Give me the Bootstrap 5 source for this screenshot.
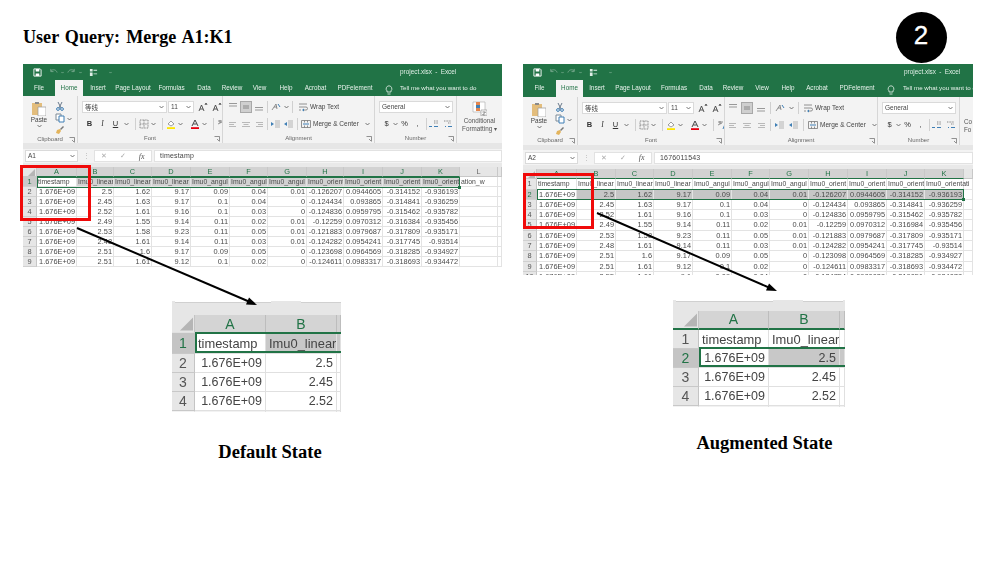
<!DOCTYPE html>
<html lang="en">
<head>
<meta charset="utf-8">
<title>User Query: Merge A1:K1</title>
<link href="https://cdn.jsdelivr.net/npm/bootstrap@5.3.0/dist/css/bootstrap.min.css" rel="stylesheet">
<style>
html,body{margin:0;background:#fff}
.stage{position:relative;width:996px;height:561px;overflow:hidden;background:#fff;font-family:"Liberation Serif",serif;color:#000}
.fig-head{height:64px;padding-left:23px}
.fig-title{font-weight:700;font-size:18.1px;line-height:20px;margin-top:27px;word-spacing:1.5px}
.step-dot{width:51px;height:51px;border-radius:50%;background:#000;color:#fff;font:26px/46px "Liberation Sans",sans-serif;-webkit-text-stroke:.3px #fff;text-align:center;margin:11.5px 49.5px 0 0}
.panel-a{position:relative;width:480px;margin-left:23px}
.panel-b{position:relative;width:450px;margin-left:20px}
.cap{width:200px;text-align:center;font-weight:700;font-size:18.5px;line-height:20px}
.panel-a .cap{margin-left:147px;margin-top:30px}
.panel-b .cap{margin-left:141.5px;margin-top:26px}
.red-box{position:absolute;border:3px solid #f00a0a;width:71px;height:56px}
.panel-a .red-box{left:-3px;top:101px}
.panel-b .red-box{left:0;top:109px}
.arrows{position:absolute;left:0;top:0;pointer-events:none}

/* excel window */
.xl-win{overflow:hidden;background:#fff;font:6.5px/10px "Liberation Sans",sans-serif;color:#444;filter:blur(.35px)}
.panel-a .xl-win{width:479px;height:207px}
.panel-b .xl-win{width:450px;height:211px}
.xl-title{height:16px;background:#217346;color:#dfeee6;padding-left:10px;align-items:center;gap:3px}
.xl-title svg{width:9px;height:9px;display:block}
.xl-title svg.tcar{width:3px;height:3px}
.xl-name{position:absolute;top:3px;font-size:6.4px;color:#dfeee6;word-spacing:1.5px}
.panel-a .xl-name{left:377px}
.panel-b .xl-name{left:381px}
.xl-title-row{position:relative}
.xl-tabs{display:grid;height:16px;background:#217346;color:#e8f2ec;text-align:center;font-size:6.3px;line-height:16px;white-space:nowrap}
.panel-a .xl-tabs{grid-template-columns:32px 28px 30px 40px 37px 28px 28px 27px 26px 33px 46px 22px 1fr}
.panel-b .xl-tabs{height:17px;grid-template-columns:33px 27px 28px 44px 38px 26px 28px 30px 22px 36px 44px 24px 1fr}
.xl-tab-on{background:#f3f3f3;color:#217346;margin-top:-1px;line-height:17px}
.xl-tell{text-align:left;overflow:hidden;font-size:6.2px}
.xl-tabs svg{width:8px;height:10px;margin-top:3px}
.xl-ribbon{display:grid;height:47px;background:#f3f3f3}
.panel-a .xl-ribbon{grid-template-columns:55px 145px 152px 82px 1fr}
.panel-b .xl-ribbon{height:48px;grid-template-columns:55px 147px 153px 82px 1fr}
.xl-grp{display:flex;flex-direction:column;border-right:1px solid #d6d6d6;min-width:0;overflow:hidden;padding-top:5px}
.xl-grp:last-child{border-right:0}
.xl-lbl{margin-top:auto;display:grid;grid-template-columns:1fr auto 1fr;height:9px;line-height:9px;margin-bottom:0;padding-top:0;font-size:6px;color:#666;text-align:center}
.xl-lbl svg{width:6px;height:6px;justify-self:end;margin:2px 2px 0 0}
.xl-row{display:flex;align-items:center;height:12px}
.xl-row+.xl-row{margin-top:5px}
.ic{width:10px;height:10px;flex:none;display:block}
.ic-car{width:5px;height:4px;flex:none;margin:0 3px 0 2px;display:block}
.xl-box{background:#fff;border:1px solid #dadada;height:12px;line-height:10px;padding-left:2px;font-size:6.5px;display:flex;justify-content:space-between;align-items:center;flex:none;white-space:nowrap;overflow:hidden}
.xl-box svg{width:5px;height:4px;margin-right:2px}
.bx-font{width:85px;margin-left:4px;font-family:"Noto Sans CJK SC","Liberation Sans",sans-serif}
.bx-size{width:26px;margin-left:1px}
.bx-num{width:74px;margin-left:4px}
.pad-b{margin-left:5px}
.tg{width:13px;text-align:center;flex:none;font-size:7.5px;color:#333}
.tg-b{font-weight:700}
.tg-i{font-style:italic;font-family:"Liberation Serif",serif}
.tg-u{text-decoration:underline}
.al-on{background:#cfcfcf;outline:1px solid #a8a8a8}
.xl-sep{width:1px;height:12px;background:#d0d0d0;margin:0 3px;flex:none}
.xl-al{margin-left:5px;gap:3px}
.panel-b .xl-al{margin-left:3px;gap:4px}
.xl-al .xl-sep{margin:0}
.xl-al .ic-car{margin:0}
.al-right{margin-left:auto;display:flex;align-items:center;gap:2px;width:76px;flex:none}
.xl-word{white-space:nowrap;font-size:6.5px}
.xl-num-row .ic-car{margin:0}
.xl-num-row .xl-sep{margin:0 2px}
.clip-wrap{display:flex;padding-left:9px}
.clip-main{display:flex;flex-direction:column;align-items:center;width:14px;font-size:6.4px;line-height:7px}
.clip-main .paste-ic{width:14px;height:15px;display:block}
.clip-main .ic-car{margin:1px 0 0}
.clip-tools{display:flex;flex-direction:column;gap:2px;margin-left:9px}
.clip-tools svg{width:10px;height:10px;display:block}
.cf-wrap{display:flex;flex-direction:column;align-items:center;line-height:8px;font-size:6.3px;white-space:nowrap;color:#555}
.cf-wrap svg{width:15px;height:15px;display:block;margin-bottom:1px}
.xl-band{height:6px;background:#e6e6e6}
.panel-b .xl-band{height:5px}
.xl-fbar{height:14px;background:#f3f3f3;align-items:center;padding-left:2px}
.panel-b .xl-fbar{height:15px}
.fb-name{width:53px}
.fb-dots{width:16px;text-align:center;color:#bbb;flex:none}
.fb-tools{width:58px;height:12px;flex:none;background:#fff;border:1px solid #e2e2e2;display:flex;align-items:center;justify-content:space-around;color:#aaa;margin-right:2px}
.fb-tools i{font:italic 8px "Liberation Serif",serif;color:#555}
.fb-val{flex:1;height:12px;background:#fff;border:1px solid #e2e2e2;padding-left:5px;line-height:10px;font-size:7px;letter-spacing:.2px}
.xl-band2{height:4px;background:#e9e9e9}
.xl-sheet{position:relative}
.sh{table-layout:fixed;border-collapse:separate;border-spacing:0;width:100%}
.sh td,.sh th{padding:0 1px;border-right:1px solid #e3e3e3;border-bottom:1px solid #e3e3e3;white-space:nowrap;overflow:hidden;font-weight:400;color:#4a4a4a;text-align:right;font-size:7.4px;line-height:9px;height:10px}
.sh th.ch{background:#e6e6e6;text-align:center;color:#666;border-right-color:#c8c8c8;border-bottom-color:#c8c8c8}
.sh th.ch.on{background:#d2d2d2;color:#217346;border-bottom:1px solid #217346}
.sh th.rh{background:#e6e6e6;text-align:center;color:#555;border-right-color:#c6c6c6;border-bottom-color:#d0d0d0;padding:0}
.sh th.rh.on{background:#c9c9c9;color:#217346}
.sh th.corner{background:#e6e6e6;padding:0;border-right-color:#c8c8c8;border-bottom-color:#c8c8c8}
.sh th.corner svg{display:block;margin:2px 1px 0 auto;width:7px;height:7px}
.sh td.tx{text-align:left;font-size:6.85px;padding:0 0 0 1px}
.sh .sel{background:#d2d2d2}
.sh .sel-d{background:#c6c6c6}
.sh .cur{background:#fff}
.sh td.ovf{overflow:visible}
.sh-b td,.sh-b th{height:10.3px;line-height:9.3px}
.sel-frame{position:absolute;border:1px solid #217346;pointer-events:none}
.fill-dot{position:absolute;right:-2px;bottom:-2px;width:3px;height:3px;background:#217346;border:0}
.panel-a .sel-frame{left:14px;top:10px;width:423px;height:11px}
.panel-b .sel-frame{left:14px;top:20px;width:427px;height:11px}

/* enlarged crops */
.zoomed{overflow:hidden;filter:blur(.3px);font:12.5px/17px "Liberation Sans",sans-serif;color:#444;background:#fff}
.panel-a .zoomed{margin:30px 0 0 149px;width:169px;height:111px}
.panel-b .zoomed{margin:25px 0 0 150px;width:172px;height:107px}
.z-top{background:#e6e6e6;padding-left:3px;gap:30px}
.panel-a .z-top{height:14px}
.panel-b .z-top{height:11px}
.z-top div{height:2px;background:#fff;border-bottom:1px solid #d0d0d0}
.z-tab-1{width:97px}
.z-tab-2{width:40px}
.zt-wrap{position:relative}
.zt{table-layout:fixed;border-collapse:separate;border-spacing:0;width:100%}
.zt th,.zt td{padding:0 3px 0 0;font-weight:400;text-align:right;color:#444;white-space:nowrap;overflow:hidden;border-right:1px solid #e0e0e0;border-bottom:1px solid #e0e0e0}
.zt .zc{background:#d4d4d4;text-align:center;color:#217346;font-size:14px;border-right-color:#bdbdbd;height:17px;padding:0}
.panel-a .zt .zc{padding-top:2px;line-height:15px}
.zt th.zc0,.panel-a .zt th.zc0{background:#e6e6e6;padding:0;border-right-color:#c4c4c4}
.zt .zc0 svg{display:block;margin:1px 1px 0 auto;width:13px;height:14px}
.zt .zr{background:#e6e6e6;text-align:center;color:#555;font-size:14px;padding:0;border-right-color:#c4c4c4;border-bottom-color:#c8c8c8}
.zt .zr.on{background:#c4c4c4;color:#217346}
.zt td.zl{text-align:left;padding:0 0 0 3px;font-size:12.9px}
.zt .sel{background:#c8c8c8}
.zt .stub{height:5px;font-size:0;line-height:0;background:#f2f2f2}
.zt .rw td,.zt .rw th{height:19px}
.zt .rw-tall td,.zt .rw-tall th{height:21px}
.z-frame{position:absolute;border:2px solid #217346;pointer-events:none}
.panel-a .z-frame{left:23px;top:17px;width:150px;height:21px}
.panel-b .z-frame{left:26px;top:36px;width:150px;height:20px}
.panel-b .zt .zc{border-bottom:2px solid #217346}
</style>
</head>
<body>
<svg class="d-none" xmlns="http://www.w3.org/2000/svg">
<symbol id="i-save" viewBox="0 0 10 10"><path d="M1 1h7l1 1v7H1z" fill="none" stroke="#fff" stroke-width="1"/><path d="M3 1h4v3H3zM3 6h4v3H3z" fill="#fff"/></symbol>
<symbol id="i-undo" viewBox="0 0 10 10"><path d="M2 3c3-2 6-1 7 2M2 1v3h3" fill="none" stroke="#79a98f" stroke-width="1"/></symbol>
<symbol id="i-redo" viewBox="0 0 10 10"><path d="M8 3C5 1 2 2 1 5M8 1v3H5" fill="none" stroke="#79a98f" stroke-width="1"/></symbol>
<symbol id="i-touch" viewBox="0 0 10 10"><path d="M1 1h3v3H1zM5 2h4v1H5zM1 5h3v4H1zM5 6h4v1H5z" fill="#dfeee6"/></symbol>
<symbol id="i-car" viewBox="0 0 5 4"><path d="M.5 1l2 2 2-2" fill="none" stroke="#555" stroke-width=".8"/></symbol>
<symbol id="i-carw" viewBox="0 0 5 4"><path d="M.5 1l2 2 2-2" fill="none" stroke="#9cc2ad" stroke-width="1"/></symbol>
<symbol id="i-paste" viewBox="0 0 14 15"><path d="M0 2h10v12H0z" fill="#e3bd7c"/><path d="M3 1h4v2H3z" fill="#8a8a8a"/><path d="M6 6h8v9H6z" fill="#fff" stroke="#999" stroke-width=".7"/></symbol>
<symbol id="i-cut" viewBox="0 0 10 10"><path d="M3 1l3 6M7 1L4 7" stroke="#6a7a8c" fill="none"/><circle cx="3" cy="8" r="1.4" fill="none" stroke="#3f7fb5"/><circle cx="7" cy="8" r="1.4" fill="none" stroke="#3f7fb5"/></symbol>
<symbol id="i-copy" viewBox="0 0 10 10"><path d="M1 1h5v6H1z" fill="#fff" stroke="#7d8a96"/><path d="M4 3h5v6H4z" fill="#fff" stroke="#3f7fb5"/></symbol>
<symbol id="i-brush" viewBox="0 0 10 10"><path d="M5 4l3-3 1 1-3 3z" fill="#777"/><path d="M2 5l3-1 1 2-2 3-3-1z" fill="#e3b45c"/></symbol>
<symbol id="i-grow" viewBox="0 0 10 10"><path d="M1 9l2.500-6L6 9M2 7h3M7 3l1-2 1 2" fill="none" stroke="#444" stroke-width=".9"/></symbol>
<symbol id="i-border" viewBox="0 0 10 10"><path d="M1 1h8v8H1zM5 1v8M1 5h8" fill="none" stroke="#888" stroke-dasharray="1 .6"/></symbol>
<symbol id="i-fill" viewBox="0 0 10 10"><path d="M2 5l3-3 3 3-3 2z" fill="#fff" stroke="#777" stroke-width=".7"/><path d="M1 8.200h8V10H1z" fill="#ffe600"/></symbol>
<symbol id="i-color" viewBox="0 0 10 10"><path d="M2 7l3-6 3 6M3.300 5h3.400" fill="none" stroke="#333" stroke-width=".9"/><path d="M1 8.200h8V10H1z" fill="#e8000f"/></symbol>
<symbol id="i-phon" viewBox="0 0 10 10"><path d="M1 2h5M3 1v3M1 5l4-2" stroke="#666" stroke-width=".7" fill="none"/><path d="M6 9l2-5 1 5" fill="none" stroke="#3f7fb5"/></symbol>
<symbol id="i-at" viewBox="0 0 10 10"><path d="M1 1.500h8M1 4h8" stroke="#999"/></symbol>
<symbol id="i-am" viewBox="0 0 10 10"><path d="M2 4h6M2 6h6" stroke="#888"/></symbol>
<symbol id="i-ab" viewBox="0 0 10 10"><path d="M1 5.500h8M1 8h8" stroke="#999"/></symbol>
<symbol id="i-orient" viewBox="0 0 10 10"><path d="M1 8l4-6 1 5M3 5h3" fill="none" stroke="#777" stroke-width=".8"/><path d="M7 2l2 3" stroke="#3f7fb5"/></symbol>
<symbol id="i-l" viewBox="0 0 10 10"><path d="M1 3.500h7M1 5.500h5M1 7.500h7" stroke="#aaa" stroke-width=".8"/></symbol>
<symbol id="i-c" viewBox="0 0 10 10"><path d="M1 3.500h8M2.500 5.500h5M1 7.500h8" stroke="#aaa" stroke-width=".8"/></symbol>
<symbol id="i-r" viewBox="0 0 10 10"><path d="M2 3.500h7M4 5.500h5M2 7.500h7" stroke="#aaa" stroke-width=".8"/></symbol>
<symbol id="i-ind" viewBox="0 0 10 10"><path d="M4 2h5M4 4h5M4 6h5M4 8h5" stroke="#999" stroke-width=".7"/><path d="M0 5l3-2v4z" fill="#3f7fb5"/></symbol>
<symbol id="i-out" viewBox="0 0 10 10"><path d="M4 2h5M4 4h5M4 6h5M4 8h5" stroke="#999" stroke-width=".7"/><path d="M3 5L0 3v4z" fill="#3f7fb5"/></symbol>
<symbol id="i-wrap" viewBox="0 0 10 10"><path d="M1 2h8M1 5h7a1.500 1.500 0 010 3H5M1 8h2" fill="none" stroke="#777" stroke-width=".8"/><path d="M6 6.500L4 8l2 1.500z" fill="#3f7fb5"/></symbol>
<symbol id="i-merge" viewBox="0 0 10 10"><path d="M.5 1.500h9v7h-9zM3.500 1.500v2M6.500 1.500v2M3.500 6.500v2M6.500 6.500v2" fill="none" stroke="#777" stroke-width=".8"/><path d="M2 5h6" stroke="#3f7fb5" stroke-width="1"/></symbol>
<symbol id="i-inc" viewBox="0 0 10 10"><path d="M5 2h4M5 4h4" stroke="#888" stroke-dasharray="1 .6"/><path d="M5 7.500h4M0 7.500h3" stroke="#3f7fb5"/></symbol>
<symbol id="i-dec" viewBox="0 0 10 10"><path d="M1 2h7M5 4h3" stroke="#888" stroke-dasharray="1 .6"/><path d="M9 7.500H5M2 7.500h1" stroke="#3f7fb5"/></symbol>
<symbol id="i-cf" viewBox="0 0 15 15"><path d="M1 1h12v10H1z" fill="#fff" stroke="#aaa" stroke-width=".6"/><path d="M4 1h4v3H4z" fill="#e3854c"/><path d="M4 4h4v3H4z" fill="#3f7fb5"/><path d="M4 7h4v3H4z" fill="#e3854c"/><path d="M9 9h6v6H9z" fill="#fff" stroke="#888" stroke-width=".6"/><path d="M10.500 11h3l-3 3h3" fill="none" stroke="#555" stroke-width=".7"/></symbol>
<symbol id="i-launch" viewBox="0 0 6 6"><path d="M.5.500h5v5M3 3l2 2" fill="none" stroke="#666" stroke-width=".7"/></symbol>
<symbol id="i-bulb" viewBox="0 0 8 10"><path d="M4 .8a3 3 0 012 5.100V7H2V5.900A3 3 0 014 .8zM2.500 9h3" fill="none" stroke="#e8f2ec" stroke-width=".8"/></symbol>
<symbol id="i-tri" viewBox="0 0 7 7"><path d="M7 0v7H0z" fill="#b5b5b5"/></symbol>
</svg>

<div class="stage">
  <div class="fig-head d-flex justify-content-between align-items-start">
    <div class="fig-title">User Query: Merge A1:K1</div>
    <div class="step-dot">2</div>
  </div>

  <div class="d-flex">
    <!-- Default state -->
    <section class="panel-a">
      <div class="xl-win">
        <div class="xl-title-row">
          <div class="xl-title d-flex">
            <svg class="me-1"><use href="#i-save"/></svg><svg><use href="#i-undo"/></svg><svg class="tcar"><use href="#i-carw"/></svg><svg><use href="#i-redo"/></svg><svg class="tcar"><use href="#i-carw"/></svg><svg class="ms-1"><use href="#i-touch"/></svg><svg class="tcar ms-2"><use href="#i-carw"/></svg>
          </div>
          <div class="xl-name">project.xlsx - Excel</div>
        </div>
        <div class="xl-tabs">
          <div>File</div><div class="xl-tab-on">Home</div><div>Insert</div><div>Page Layout</div><div>Formulas</div><div>Data</div><div>Review</div><div>View</div><div>Help</div><div>Acrobat</div><div>PDFelement</div><div><svg><use href="#i-bulb"/></svg></div><div class="xl-tell">Tell me what you want to do</div>
        </div>
        <div class="xl-ribbon">
          <div class="xl-grp">
            <div class="clip-wrap">
              <div class="clip-main"><svg class="paste-ic"><use href="#i-paste"/></svg><span>Paste</span><svg class="ic-car"><use href="#i-car"/></svg></div>
              <div class="clip-tools"><svg><use href="#i-cut"/></svg><svg><use href="#i-copy"/></svg><svg><use href="#i-brush"/></svg></div>
              <svg class="ic-car mt-3"><use href="#i-car"/></svg>
            </div>
            <div class="xl-lbl"><span></span><span>Clipboard</span><svg><use href="#i-launch"/></svg></div>
          </div>
          <div class="xl-grp">
            <div class="xl-row"><div class="xl-box bx-font"><span>等线</span><svg><use href="#i-car"/></svg></div><div class="xl-box bx-size"><span>11</span><svg><use href="#i-car"/></svg></div><svg class="ic ms-1"><use href="#i-grow"/></svg><svg class="ic ms-1"><use href="#i-grow"/></svg></div>
            <div class="xl-row pad-b"><span class="tg tg-b">B</span><span class="tg tg-i">I</span><span class="tg tg-u">U</span><svg class="ic-car"><use href="#i-car"/></svg><span class="xl-sep"></span><svg class="ic"><use href="#i-border"/></svg><svg class="ic-car"><use href="#i-car"/></svg><span class="xl-sep"></span><svg class="ic"><use href="#i-fill"/></svg><svg class="ic-car"><use href="#i-car"/></svg><svg class="ic ms-1"><use href="#i-color"/></svg><svg class="ic-car"><use href="#i-car"/></svg><span class="xl-sep"></span><svg class="ic"><use href="#i-phon"/></svg><svg class="ic-car"><use href="#i-car"/></svg></div>
            <div class="xl-lbl"><span></span><span>Font</span><svg><use href="#i-launch"/></svg></div>
          </div>
          <div class="xl-grp">
            <div class="xl-row xl-al"><svg class="ic"><use href="#i-at"/></svg><svg class="ic al-on"><use href="#i-am"/></svg><svg class="ic"><use href="#i-ab"/></svg><span class="xl-sep"></span><svg class="ic"><use href="#i-orient"/></svg><svg class="ic-car"><use href="#i-car"/></svg><span class="xl-sep"></span><div class="al-right"><svg class="ic"><use href="#i-wrap"/></svg><span class="xl-word">Wrap Text</span></div></div>
            <div class="xl-row xl-al"><svg class="ic"><use href="#i-l"/></svg><svg class="ic"><use href="#i-c"/></svg><svg class="ic"><use href="#i-r"/></svg><span class="xl-sep"></span><svg class="ic"><use href="#i-out"/></svg><svg class="ic"><use href="#i-ind"/></svg><span class="xl-sep"></span><div class="al-right"><svg class="ic"><use href="#i-merge"/></svg><span class="xl-word">Merge &amp; Center</span><svg class="ic-car ms-1"><use href="#i-car"/></svg></div></div>
            <div class="xl-lbl"><span></span><span>Alignment</span><svg><use href="#i-launch"/></svg></div>
          </div>
          <div class="xl-grp">
            <div class="xl-row"><div class="xl-box bx-num"><span>General</span><svg><use href="#i-car"/></svg></div></div>
            <div class="xl-row pad-b xl-num-row"><span class="tg">$</span><svg class="ic-car"><use href="#i-car"/></svg><span class="tg">%</span><span class="tg">,</span><span class="xl-sep"></span><svg class="ic"><use href="#i-inc"/></svg><svg class="ic ms-1"><use href="#i-dec"/></svg></div>
            <div class="xl-lbl"><span></span><span>Number</span><svg><use href="#i-launch"/></svg></div>
          </div>
          <div class="xl-grp">
            <div class="cf-wrap"><svg><use href="#i-cf"/></svg><span>Conditional</span><span>Formatting ▾</span></div>
          </div>
        </div>
        <div class="xl-band"></div>
        <div class="xl-fbar d-flex">
          <div class="xl-box fb-name"><span>A1</span><svg><use href="#i-car"/></svg></div>
          <div class="fb-dots">⋮</div>
          <div class="fb-tools"><span>✕</span><span>✓</span><i>fx</i></div>
          <div class="fb-val">timestamp</div>
        </div>
        <div class="xl-band2"></div>
        <div class="xl-sheet">
          <table class="sh">
            <colgroup><col style="width:14px"><col style="width:40px"><col style="width:37px"><col style="width:38px"><col style="width:39px"><col style="width:39px"><col style="width:38px"><col style="width:39px"><col style="width:37px"><col style="width:39px"><col style="width:39px"><col style="width:38px"><col style="width:38px"><col></colgroup>
            <tr><th class="corner"><svg><use href="#i-tri"/></svg></th><th class="ch on">A</th><th class="ch on">B</th><th class="ch on">C</th><th class="ch on">D</th><th class="ch on">E</th><th class="ch on">F</th><th class="ch on">G</th><th class="ch on">H</th><th class="ch on">I</th><th class="ch on">J</th><th class="ch on">K</th><th class="ch">L</th><th class="ch"></th></tr>
            <tr><th class="rh on">1</th><td class="tx cur">timestamp</td><td class="tx sel">Imu0_linear</td><td class="tx sel">Imu0_linear</td><td class="tx sel">Imu0_linear</td><td class="tx sel">Imu0_angul</td><td class="tx sel">Imu0_angul</td><td class="tx sel">Imu0_angul</td><td class="tx sel">Imu0_orient</td><td class="tx sel">Imu0_orient</td><td class="tx sel">Imu0_orient</td><td class="tx sel">Imu0_orient</td><td class="tx">ation_w</td><td></td></tr>
            <tr><th class="rh">2</th><td>1.676E+09</td><td>2.5</td><td>1.62</td><td>9.17</td><td>0.09</td><td>0.04</td><td>0.01</td><td>-0.126207</td><td>0.0944605</td><td>-0.314152</td><td>-0.936193</td><td></td><td></td></tr>
            <tr><th class="rh">3</th><td>1.676E+09</td><td>2.45</td><td>1.63</td><td>9.17</td><td>0.1</td><td>0.04</td><td>0</td><td>-0.124434</td><td>0.093865</td><td>-0.314841</td><td>-0.936259</td><td></td><td></td></tr>
            <tr><th class="rh">4</th><td>1.676E+09</td><td>2.52</td><td>1.61</td><td>9.16</td><td>0.1</td><td>0.03</td><td>0</td><td>-0.124836</td><td>0.0959795</td><td>-0.315462</td><td>-0.935782</td><td></td><td></td></tr>
            <tr><th class="rh">5</th><td>1.676E+09</td><td>2.49</td><td>1.55</td><td>9.14</td><td>0.11</td><td>0.02</td><td>0.01</td><td>-0.12259</td><td>0.0970312</td><td>-0.316384</td><td>-0.935456</td><td></td><td></td></tr>
            <tr><th class="rh">6</th><td>1.676E+09</td><td>2.53</td><td>1.58</td><td>9.23</td><td>0.11</td><td>0.05</td><td>0.01</td><td>-0.121883</td><td>0.0979687</td><td>-0.317809</td><td>-0.935171</td><td></td><td></td></tr>
            <tr><th class="rh">7</th><td>1.676E+09</td><td>2.48</td><td>1.61</td><td>9.14</td><td>0.11</td><td>0.03</td><td>0.01</td><td>-0.124282</td><td>0.0954241</td><td>-0.317745</td><td>-0.93514</td><td></td><td></td></tr>
            <tr><th class="rh">8</th><td>1.676E+09</td><td>2.51</td><td>1.6</td><td>9.17</td><td>0.09</td><td>0.05</td><td>0</td><td>-0.123698</td><td>0.0964569</td><td>-0.318285</td><td>-0.934927</td><td></td><td></td></tr>
            <tr><th class="rh">9</th><td>1.676E+09</td><td>2.51</td><td>1.61</td><td>9.12</td><td>0.1</td><td>0.02</td><td>0</td><td>-0.124611</td><td>0.0983317</td><td>-0.318693</td><td>-0.934472</td><td></td><td></td></tr>
          </table>
          <div class="sel-frame"><div class="fill-dot"></div></div>
        </div>
      </div>
      <div class="red-box"></div>

      <div class="zoomed">
        <div class="z-top d-flex"><div class="z-tab-1"></div><div class="z-tab-2"></div></div>
        <div class="zt-wrap">
          <table class="zt">
            <colgroup><col style="width:23px"><col style="width:71px"><col style="width:71px"><col></colgroup>
            <tr><th class="zc zc0"><svg><use href="#i-tri"/></svg></th><th class="zc">A</th><th class="zc">B</th><th class="zc"></th></tr>
            <tr class="rw-tall"><th class="zr on">1</th><td class="zl">timestamp</td><td class="zl sel">Imu0_linear</td><td class="sel"></td></tr>
            <tr class="rw"><th class="zr">2</th><td>1.676E+09</td><td>2.5</td><td></td></tr>
            <tr class="rw"><th class="zr">3</th><td>1.676E+09</td><td>2.45</td><td></td></tr>
            <tr class="rw"><th class="zr">4</th><td>1.676E+09</td><td>2.52</td><td></td></tr>
            <tr><th class="stub"></th><td class="stub"></td><td class="stub"></td><td class="stub"></td></tr>
          </table>
          <div class="z-frame"></div>
        </div>
      </div>
      <div class="cap">Default State</div>
    </section>

    <!-- Augmented state -->
    <section class="panel-b">
      <div class="xl-win">
        <div class="xl-title-row">
          <div class="xl-title d-flex">
            <svg class="me-1"><use href="#i-save"/></svg><svg><use href="#i-undo"/></svg><svg class="tcar"><use href="#i-carw"/></svg><svg><use href="#i-redo"/></svg><svg class="tcar"><use href="#i-carw"/></svg><svg class="ms-1"><use href="#i-touch"/></svg><svg class="tcar ms-2"><use href="#i-carw"/></svg>
          </div>
          <div class="xl-name">project.xlsx - Excel</div>
        </div>
        <div class="xl-tabs">
          <div>File</div><div class="xl-tab-on">Home</div><div>Insert</div><div>Page Layout</div><div>Formulas</div><div>Data</div><div>Review</div><div>View</div><div>Help</div><div>Acrobat</div><div>PDFelement</div><div><svg><use href="#i-bulb"/></svg></div><div class="xl-tell">Tell me what you want to do</div>
        </div>
        <div class="xl-ribbon">
          <div class="xl-grp">
            <div class="clip-wrap">
              <div class="clip-main"><svg class="paste-ic"><use href="#i-paste"/></svg><span>Paste</span><svg class="ic-car"><use href="#i-car"/></svg></div>
              <div class="clip-tools"><svg><use href="#i-cut"/></svg><svg><use href="#i-copy"/></svg><svg><use href="#i-brush"/></svg></div>
              <svg class="ic-car mt-3"><use href="#i-car"/></svg>
            </div>
            <div class="xl-lbl"><span></span><span>Clipboard</span><svg><use href="#i-launch"/></svg></div>
          </div>
          <div class="xl-grp">
            <div class="xl-row"><div class="xl-box bx-font"><span>等线</span><svg><use href="#i-car"/></svg></div><div class="xl-box bx-size"><span>11</span><svg><use href="#i-car"/></svg></div><svg class="ic ms-1"><use href="#i-grow"/></svg><svg class="ic ms-1"><use href="#i-grow"/></svg></div>
            <div class="xl-row pad-b"><span class="tg tg-b">B</span><span class="tg tg-i">I</span><span class="tg tg-u">U</span><svg class="ic-car"><use href="#i-car"/></svg><span class="xl-sep"></span><svg class="ic"><use href="#i-border"/></svg><svg class="ic-car"><use href="#i-car"/></svg><span class="xl-sep"></span><svg class="ic"><use href="#i-fill"/></svg><svg class="ic-car"><use href="#i-car"/></svg><svg class="ic ms-1"><use href="#i-color"/></svg><svg class="ic-car"><use href="#i-car"/></svg><span class="xl-sep"></span><svg class="ic"><use href="#i-phon"/></svg><svg class="ic-car"><use href="#i-car"/></svg></div>
            <div class="xl-lbl"><span></span><span>Font</span><svg><use href="#i-launch"/></svg></div>
          </div>
          <div class="xl-grp">
            <div class="xl-row xl-al"><svg class="ic"><use href="#i-at"/></svg><svg class="ic al-on"><use href="#i-am"/></svg><svg class="ic"><use href="#i-ab"/></svg><span class="xl-sep"></span><svg class="ic"><use href="#i-orient"/></svg><svg class="ic-car"><use href="#i-car"/></svg><span class="xl-sep"></span><div class="al-right"><svg class="ic"><use href="#i-wrap"/></svg><span class="xl-word">Wrap Text</span></div></div>
            <div class="xl-row xl-al"><svg class="ic"><use href="#i-l"/></svg><svg class="ic"><use href="#i-c"/></svg><svg class="ic"><use href="#i-r"/></svg><span class="xl-sep"></span><svg class="ic"><use href="#i-out"/></svg><svg class="ic"><use href="#i-ind"/></svg><span class="xl-sep"></span><div class="al-right"><svg class="ic"><use href="#i-merge"/></svg><span class="xl-word">Merge &amp; Center</span><svg class="ic-car ms-1"><use href="#i-car"/></svg></div></div>
            <div class="xl-lbl"><span></span><span>Alignment</span><svg><use href="#i-launch"/></svg></div>
          </div>
          <div class="xl-grp">
            <div class="xl-row"><div class="xl-box bx-num"><span>General</span><svg><use href="#i-car"/></svg></div></div>
            <div class="xl-row pad-b xl-num-row"><span class="tg">$</span><svg class="ic-car"><use href="#i-car"/></svg><span class="tg">%</span><span class="tg">,</span><span class="xl-sep"></span><svg class="ic"><use href="#i-inc"/></svg><svg class="ic ms-1"><use href="#i-dec"/></svg></div>
            <div class="xl-lbl"><span></span><span>Number</span><svg><use href="#i-launch"/></svg></div>
          </div>
          <div class="xl-grp">
            <div class="cf-wrap align-items-start ps-1"><span class="mt-3">Co</span><span>Fo</span></div>
          </div>
        </div>
        <div class="xl-band"></div>
        <div class="xl-fbar d-flex">
          <div class="xl-box fb-name"><span>A2</span><svg><use href="#i-car"/></svg></div>
          <div class="fb-dots">⋮</div>
          <div class="fb-tools"><span>✕</span><span>✓</span><i>fx</i></div>
          <div class="fb-val">1676011543</div>
        </div>
        <div class="xl-band2"></div>
        <div class="xl-sheet">
          <table class="sh sh-b">
            <colgroup><col style="width:14px"><col style="width:40px"><col style="width:39px"><col style="width:38px"><col style="width:39px"><col style="width:39px"><col style="width:38px"><col style="width:39px"><col style="width:39px"><col style="width:39px"><col style="width:38px"><col style="width:39px"><col></colgroup>
            <tr><th class="corner"><svg><use href="#i-tri"/></svg></th><th class="ch on">A</th><th class="ch on">B</th><th class="ch on">C</th><th class="ch on">D</th><th class="ch on">E</th><th class="ch on">F</th><th class="ch on">G</th><th class="ch on">H</th><th class="ch on">I</th><th class="ch on">J</th><th class="ch on">K</th><th class="ch"></th></tr>
            <tr><th class="rh">1</th><td class="tx">timestamp</td><td class="tx">Imu0_linear</td><td class="tx">Imu0_linear</td><td class="tx">Imu0_linear</td><td class="tx">Imu0_angul</td><td class="tx">Imu0_angul</td><td class="tx">Imu0_angul</td><td class="tx">Imu0_orient</td><td class="tx">Imu0_orient</td><td class="tx">Imu0_orient</td><td class="tx ovf">Imu0_orientati</td><td></td></tr>
            <tr><th class="rh on">2</th><td class="cur">1.676E+09</td><td class="sel-d">2.5</td><td class="sel-d">1.62</td><td class="sel-d">9.17</td><td class="sel-d">0.09</td><td class="sel-d">0.04</td><td class="sel-d">0.01</td><td class="sel-d">-0.126207</td><td class="sel-d">0.0944605</td><td class="sel-d">-0.314152</td><td class="sel-d">-0.936193</td><td></td></tr>
            <tr><th class="rh">3</th><td>1.676E+09</td><td>2.45</td><td>1.63</td><td>9.17</td><td>0.1</td><td>0.04</td><td>0</td><td>-0.124434</td><td>0.093865</td><td>-0.314841</td><td>-0.936259</td><td></td></tr>
            <tr><th class="rh">4</th><td>1.676E+09</td><td>2.52</td><td>1.61</td><td>9.16</td><td>0.1</td><td>0.03</td><td>0</td><td>-0.124836</td><td>0.0959795</td><td>-0.315462</td><td>-0.935782</td><td></td></tr>
            <tr><th class="rh">5</th><td>1.676E+09</td><td>2.49</td><td>1.55</td><td>9.14</td><td>0.11</td><td>0.02</td><td>0.01</td><td>-0.12259</td><td>0.0970312</td><td>-0.316984</td><td>-0.935456</td><td></td></tr>
            <tr><th class="rh">6</th><td>1.676E+09</td><td>2.53</td><td>1.58</td><td>9.23</td><td>0.11</td><td>0.05</td><td>0.01</td><td>-0.121883</td><td>0.0979687</td><td>-0.317809</td><td>-0.935171</td><td></td></tr>
            <tr><th class="rh">7</th><td>1.676E+09</td><td>2.48</td><td>1.61</td><td>9.14</td><td>0.11</td><td>0.03</td><td>0.01</td><td>-0.124282</td><td>0.0954241</td><td>-0.317745</td><td>-0.93514</td><td></td></tr>
            <tr><th class="rh">8</th><td>1.676E+09</td><td>2.51</td><td>1.6</td><td>9.17</td><td>0.09</td><td>0.05</td><td>0</td><td>-0.123098</td><td>0.0964569</td><td>-0.318285</td><td>-0.934927</td><td></td></tr>
            <tr><th class="rh">9</th><td>1.676E+09</td><td>2.51</td><td>1.61</td><td>9.12</td><td>0.1</td><td>0.02</td><td>0</td><td>-0.124611</td><td>0.0983317</td><td>-0.318693</td><td>-0.934472</td><td></td></tr>
            <tr><th class="rh">10</th><td>1.676E+09</td><td>2.55</td><td>1.61</td><td>9.1</td><td>0.09</td><td>0.04</td><td>0</td><td>-0.124754</td><td>0.0980039</td><td>-0.319051</td><td>-0.934078</td><td></td></tr>
          </table>
          <div class="sel-frame"><div class="fill-dot"></div></div>
        </div>
      </div>
      <div class="red-box"></div>

      <div class="zoomed">
        <div class="z-top d-flex"><div class="z-tab-1"></div><div class="z-tab-2"></div></div>
        <div class="zt-wrap">
          <table class="zt">
            <colgroup><col style="width:26px"><col style="width:70px"><col style="width:71px"><col></colgroup>
            <tr><th class="zc zc0"><svg><use href="#i-tri"/></svg></th><th class="zc">A</th><th class="zc">B</th><th class="zc"></th></tr>
            <tr class="rw"><th class="zr">1</th><td class="zl">timestamp</td><td class="zl">Imu0_linear</td><td></td></tr>
            <tr class="rw"><th class="zr on">2</th><td>1.676E+09</td><td class="sel">2.5</td><td class="sel"></td></tr>
            <tr class="rw"><th class="zr">3</th><td>1.676E+09</td><td>2.45</td><td></td></tr>
            <tr class="rw"><th class="zr">4</th><td>1.676E+09</td><td>2.52</td><td></td></tr>
            <tr><th class="stub"></th><td class="stub"></td><td class="stub"></td><td class="stub"></td></tr>
          </table>
          <div class="z-frame"></div>
        </div>
      </div>
      <div class="cap">Augmented State</div>
    </section>
  </div>

  <svg class="arrows" width="996" height="561" xmlns="http://www.w3.org/2000/svg">
    <path d="M77 228L250 302" stroke="#000" stroke-width="2" fill="none"/>
    <path d="M257 305l-11 -.5 3 -7z" fill="#000"/>
    <path d="M597 213L770 288" stroke="#000" stroke-width="2" fill="none"/>
    <path d="M777 291l-11 -.5 3 -7z" fill="#000"/>
  </svg>
</div>
<script src="https://cdn.jsdelivr.net/npm/bootstrap@5.3.0/dist/js/bootstrap.bundle.min.js"></script>
</body>
</html>
